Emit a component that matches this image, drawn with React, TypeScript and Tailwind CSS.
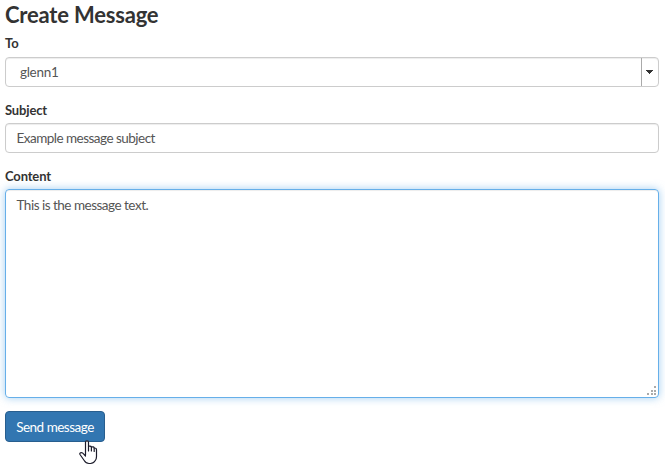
function ResizeGrip() {
  return (
    <svg className="absolute bottom-[1px] right-[1px]" width="11" height="10" viewBox="0 0 11 10" fill="#aaa" shapeRendering="crispEdges">
      <path d="M8 0h2v2H8zM5 4h2v2H5zM8 4h2v2H8zM1 7h2v2H1zM5 7h2v2H5zM8 7h2v2H8z" />
    </svg>
  );
}

function HandCursor() {
  return (
    <svg className="absolute left-[74px] top-[29px]" width="19" height="25" viewBox="0 0 19 25" fill="white" stroke="#1c1c2b" strokeWidth="1.2" strokeLinejoin="round" strokeLinecap="round">
      <path d="M6.5 15V2.2Q6.5 .8 8 .8T9.5 2.2V6.3Q11.9 5.5 12.4 7Q14.8 6.3 15.2 8Q17.5 7.8 17.5 10V16.5Q17.5 19 16.3 20.5Q14.4 23.5 11.5 23.5H10Q7 23.5 5.2 20.5L1 14.5Q.4 13.3 1.5 12.8Q3.3 12.3 5 14.3L6.5 16" />
      <path fill="none" d="M9.5 6.3V11M12.4 7V11M15.2 8V11.5" />
    </svg>
  );
}

export default function App() {
  return (
    <main className="h-[467px] w-[665px] overflow-hidden bg-white pl-[5px] pr-[6px] pt-px font-['Lato',sans-serif] text-[13.5px] leading-5 text-[#333]">
      <h1 className="h-8 text-[22px] font-bold leading-[27px] tracking-[-0.2px]">Create Message</h1>
      <form>
        <label className="block h-6 text-[13px] font-bold tracking-[-0.1px]">To</label>
        <div className="flex h-[30px] rounded-[4px] border border-[#ccc] shadow-[inset_0_1px_1px_rgba(0,0,0,.075)]">
          <span className="flex-1 pl-[14px] leading-[29px] tracking-[-0.3px] text-[#555]">glenn1</span>
          <span className="flex w-[17px] items-center pl-1 border-l border-[#aaa]">
            <svg width="7" height="4" viewBox="0 0 7 4" shapeRendering="crispEdges"><path d="M0 0h7v1H0zM1 1h5v1H1zM2 2h3v1H2zM3 3h1v1H3z" fill="#333" /></svg>
          </span>
        </div>
        <label className="mt-[13px] block h-[23px] text-[13px] font-bold tracking-[-0.15px]">Subject</label>
        <div className="h-[30px] rounded-[4px] border border-[#ccc] pl-[10.5px] leading-[29px] tracking-[-0.52px] text-[#555] shadow-[inset_0_1px_1px_rgba(0,0,0,.075)]">Example message subject</div>
        <label className="mt-[13px] block h-[23px] text-[13px] font-bold tracking-[-0.15px]">Content</label>
        <div className="relative h-[209px] rounded-[4px] border border-[#66afe9] pl-[10.5px] pt-[5px] tracking-[-0.5px] text-[#555] shadow-[inset_0_1px_1px_rgba(0,0,0,.075),0_0_8px_rgba(102,175,233,.6)]">
          This is the message text.
          <ResizeGrip />
        </div>
        <div className="relative mt-[13px] w-[100px]">
          <button type="button" className="block h-[31px] w-full rounded-[4px] border border-[#285e8e] bg-[#3276b1] tracking-[-0.5px] text-white">Send message</button>
          <HandCursor />
        </div>
      </form>
    </main>
  );
}
